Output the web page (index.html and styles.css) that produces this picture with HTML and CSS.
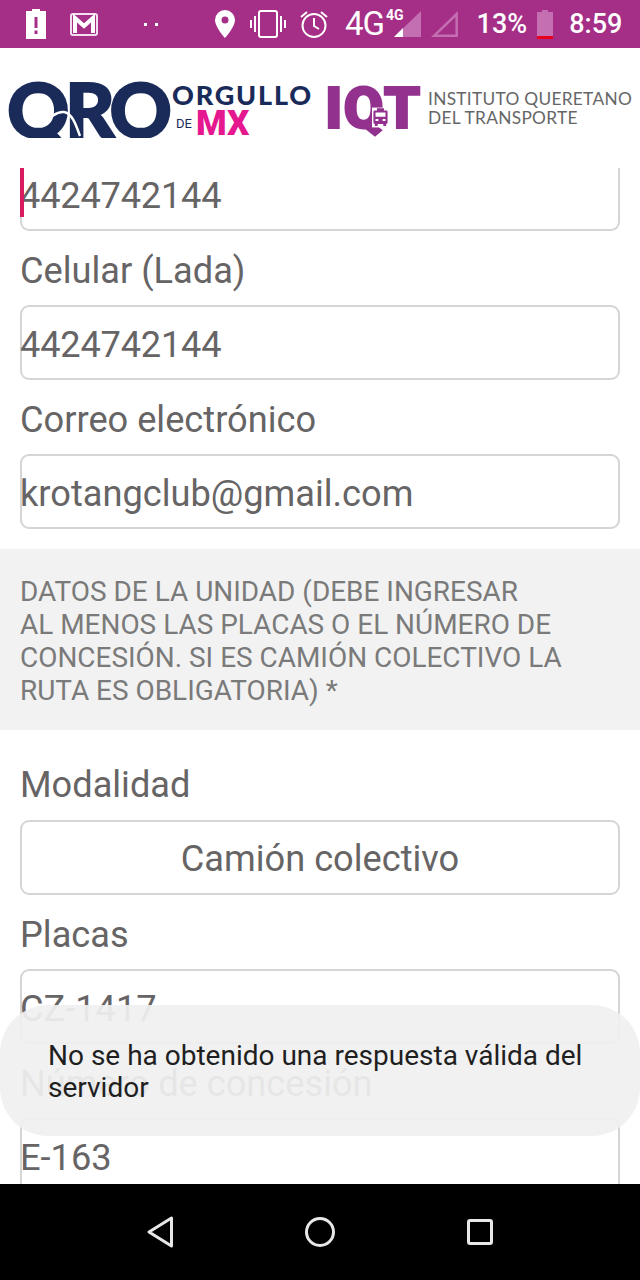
FILE: index.html
```html
<!DOCTYPE html>
<html lang="es">
<head>
  <meta charset="UTF-8">
  <meta name="viewport" content="width=device-width, initial-scale=1.0">
  <title>Datos de la unidad</title>
  <link rel="stylesheet" href="styles.css">
</head>
<body>
  <div class="screen">
    <!-- barra de estado -->
    <div class="statusbar">
      <svg class="ico ico-batalert" width="20" height="30" viewBox="0 0 20 30">
        <path fill="#fff" fill-rule="evenodd" d="M6 0h8v2h6v28H0V2h6zM8.500 8v11h3V8zM8.500 21.500v3.500h3v-3.500z"/>
      </svg>
      <svg class="ico ico-mail" width="28" height="23" viewBox="0 0 28 23">
        <rect x="1" y="1" width="26" height="21" rx="2" fill="none" stroke="#f4dff0" stroke-width="2"/>
        <path fill="none" stroke="#fff" stroke-width="4" d="M5 20V5l9 8 9-8v15"/>
      </svg>
      <span class="dots"><i></i><i></i></span>
      <svg class="ico ico-pin" width="20" height="28" viewBox="0 0 20 28">
        <path fill="#fff" fill-rule="evenodd" d="M10 0a10 10 0 0 1 10 10c0 7-10 18-10 18S0 17 0 10A10 10 0 0 1 10 0zm0 6.500a3.500 3.500 0 1 0 0 7 3.500 3.500 0 0 0 0-7z"/>
      </svg>
      <svg class="ico ico-vibrate" width="36" height="28" viewBox="0 0 36 28" fill="none" stroke="#fff">
        <rect x="9" y="1" width="18" height="26" rx="2" stroke-width="2"/>
        <path stroke-width="2" d="M5 6v16M1 10v8M31 6v16M35 10v8"/>
      </svg>
      <svg class="ico ico-alarm" width="28" height="28" viewBox="0 0 28 28" fill="none" stroke="#fff" stroke-width="2">
        <circle cx="14" cy="15.500" r="11.500"/>
        <path d="M14 8v8l5 3M1 7l6-5M27 7l-6-5"/>
      </svg>
      <span class="net">4G</span>
      <span class="net-small">4G</span>
      <svg class="ico ico-signal" width="27" height="26" viewBox="0 0 27 26">
        <path fill="#c36fb1" d="M27 0v26H0z"/>
        <path fill="#fff" d="M9 17v9H0z"/>
      </svg>
      <svg class="ico ico-nosignal" width="27" height="26" viewBox="0 0 27 26">
        <path fill="none" stroke="#c36fb1" stroke-width="2.500" d="M25.700 3v21.700H3.200z"/>
      </svg>
      <span class="clock pct">13%</span>
      <svg class="ico ico-bat" width="16" height="29" viewBox="0 0 16 29">
        <path fill="#c36fb1" d="M5 0h6v2h5v24H0V2h5z"/>
        <path fill="#e8001c" d="M0 26h16v3H0z"/>
      </svg>
      <span class="clock time">8:59</span>
    </div>

    <!-- logotipos -->
    <header class="brand">
      <div class="logo-qro">
        <span class="qro">QRO</span>
        <svg class="qro-wave" width="50" height="34" viewBox="0 0 50 34">
          <path fill="none" stroke="#fff" stroke-width="2.500" d="M2 13c8-1 10-8 19-7 8 1 12 13 16 24"/>
        </svg>
        <span class="qro-base"></span>
      </div>
      <div class="logo-orgullo">
        <span class="orgullo">ORGULLO</span>
        <div class="de-mx"><span class="de">DE</span><span class="mx">MX</span></div>
      </div>
      <div class="logo-iqt">
        <span class="iqt">IQT</span>
        <svg class="bus" width="17" height="21" viewBox="0 0 24 28">
          <path fill="#fff" d="M0 0h24v28H0z"/>
          <path fill="#93328e" d="M7 1h10v3h3a2 2 0 0 1 2 2v15a2 2 0 0 1-2 2v3h-4v-3H8v3H4v-3a2 2 0 0 1-2-2V6a2 2 0 0 1 2-2h3z"/>
          <path fill="#fff" d="M5 7h14v6H5zM5 16h4v3H5zM15 16h4v3h-4z"/>
        </svg>
      </div>
      <div class="iqt-name">INSTITUTO QUERETANO<br>DEL TRANSPORTE</div>
    </header>

    <!-- formulario -->
    <main class="content">
      <div class="box box-cut box-num"><span class="caret"></span>4424742144</div>
      <label class="lbl">Celular (Lada)</label>
      <div class="box box-num">4424742144</div>
      <label class="lbl">Correo electrónico</label>
      <div class="box">krotangclub@gmail.com</div>

      <div class="section-note">
        DATOS DE LA UNIDAD (DEBE INGRESAR<br>
        AL MENOS LAS PLACAS O EL NÚMERO DE<br>
        CONCESIÓN. SI ES CAMIÓN COLECTIVO LA<br>
        RUTA ES OBLIGATORIA) *
      </div>

      <label class="lbl lbl-first">Modalidad</label>
      <div class="box box-select">Camión colectivo</div>
      <label class="lbl">Placas</label>
      <div class="box">CZ-1417</div>
      <label class="lbl">Número de concesión</label>
      <div class="box">E-163</div>

      <div class="toast">No se ha obtenido una respuesta válida del servidor</div>
    </main>

    <!-- botones de navegacion -->
    <nav class="navbar">
      <svg width="28" height="32" viewBox="0 0 28 32" fill="none" stroke="#e8e8e8" stroke-width="3" stroke-linejoin="round">
        <path d="M25.500 2v28L3 16z"/>
      </svg>
      <svg width="32" height="32" viewBox="0 0 32 32" fill="none" stroke="#e8e8e8" stroke-width="3">
        <circle cx="16" cy="16" r="13.500"/>
      </svg>
      <svg width="28" height="28" viewBox="0 0 28 28" fill="none" stroke="#e8e8e8" stroke-width="3">
        <rect x="2.500" y="2.500" width="23" height="23" rx="1.500"/>
      </svg>
    </nav>
  </div>
</body>
</html>
```

FILE: styles.css
```css
* { box-sizing: border-box; }
html, body { margin: 0; padding: 0; }
body { font-family: Roboto, "Liberation Sans", sans-serif; background: #fff; }

.screen { width: 640px; height: 1280px; display: flex; flex-direction: column; overflow: hidden; }

/* status bar */
.statusbar { height: 48px; flex: none; background: #a52f87; display: flex; align-items: center; padding-left: 26px; color: #fff; }
.ico { display: block; flex: none; }
.ico-mail { margin-left: 24px; }
.dots { display: flex; gap: 8px; margin-left: 46px; }
.dots i { display: block; width: 3px; height: 3px; background: #fff; }
.ico-pin { margin-left: 57px; }
.ico-vibrate { margin-left: 15px; }
.ico-alarm { margin-left: 14px; }
.net { font-size: 33px; margin-left: 17px; letter-spacing: -1px; line-height: 48px; }
.net-small { font-size: 14px; font-weight: 700; align-self: flex-start; margin: 8px 0 0 2px; line-height: 14px; }
.ico-signal { margin-left: -10px; }
.ico-nosignal { margin-left: 10px; }
.clock { font-size: 27px; font-weight: 500; line-height: 48px; }
.pct { margin-left: 19px; }
.ico-bat { margin-left: 10px; }
.time { margin-left: 16px; }

/* logos */
.brand { height: 120px; flex: none; background: #fff; display: flex; align-items: center; padding-left: 7px; }
.logo-qro { position: relative; height: 72px; width: 164px; flex: none; }
.qro { display: block; font-family: Lato, Roboto, sans-serif; font-size: 77px; font-weight: 900; color: #1a2b5a; -webkit-text-stroke: 2px #1a2b5a; letter-spacing: -4.500px; line-height: 72px; white-space: nowrap; }
.qro-wave { position: absolute; left: 36px; top: 34px; }
.qro-base { position: absolute; left: 0; right: 0; top: 66px; height: 14px; background: #fff; }
.logo-orgullo { display: flex; flex-direction: column; flex: none; width: 140px; margin-top: 4px; margin-left: 1px; color: #1a2b5a; }
.orgullo { font-family: Lato, Roboto, sans-serif; font-size: 27px; font-weight: 900; letter-spacing: 1.800px; line-height: 24px; }
.de-mx { display: flex; align-items: center; height: 28px; margin-left: 4px; margin-top: 3px; }
.de { font-size: 13px; width: 20px; line-height: 13px; }
.mx { font-size: 35px; font-weight: 900; color: #e6188f; line-height: 28px; }
.logo-iqt { position: relative; flex: none; margin-left: 13px; width: 96px; height: 44px; }
.iqt { display: block; font-size: 58px; font-weight: 900; color: #93328e; -webkit-text-stroke: 2px #93328e; letter-spacing: 1px; line-height: 44px; white-space: nowrap; }
.bus { position: absolute; left: 47px; top: 21px; }
.iqt-name { margin-left: 7px; font-family: Lato, sans-serif; font-size: 17.300px; line-height: 19px; color: #666; letter-spacing: 0.300px; white-space: nowrap; }

/* form */
.content { position: relative; flex: 1; overflow: hidden; background: #fff; padding: 0; }
.box { height: 75px; margin: 0 20px; border: 2px solid #d5d5d5; border-radius: 9px; font-size: 36.200px; line-height: 75px; text-indent: -2px; color: #666465; white-space: nowrap; }
.box-num { letter-spacing: -0.200px; }
.box-cut { position: relative; height: 63px; border-top: 0; border-top-left-radius: 0; border-top-right-radius: 0; line-height: 55px; }
.box-select { text-align: center; text-indent: 0; line-height: 73px; }
.caret { position: absolute; left: -2px; top: 0; width: 4px; height: 49px; background: #d81b60; }
.lbl { display: block; height: 74px; margin: 0 20px; padding-top: 18px; font-size: 36.200px; line-height: 44px; color: #666465; }
.lbl-first { height: 90px; padding-top: 33px; }

.section-note { margin-top: 20px; height: 181px; background: #f2f2f2; padding: 26px 20px 0; font-size: 27.950px; line-height: 33px; color: #7a7a7a; white-space: nowrap; }

/* message over the form */
.toast { position: absolute; left: 0; right: 0; top: 837px; height: 131px; padding: 35px 48px 0; border-radius: 48px; background: rgba(240, 240, 240, 0.93); font-size: 28px; line-height: 32px; color: #1f1f1f; }

/* nav buttons */
.navbar { height: 96px; flex: none; background: #000; display: flex; align-items: center; justify-content: center; gap: 130px; padding-bottom: 1px; }
```
